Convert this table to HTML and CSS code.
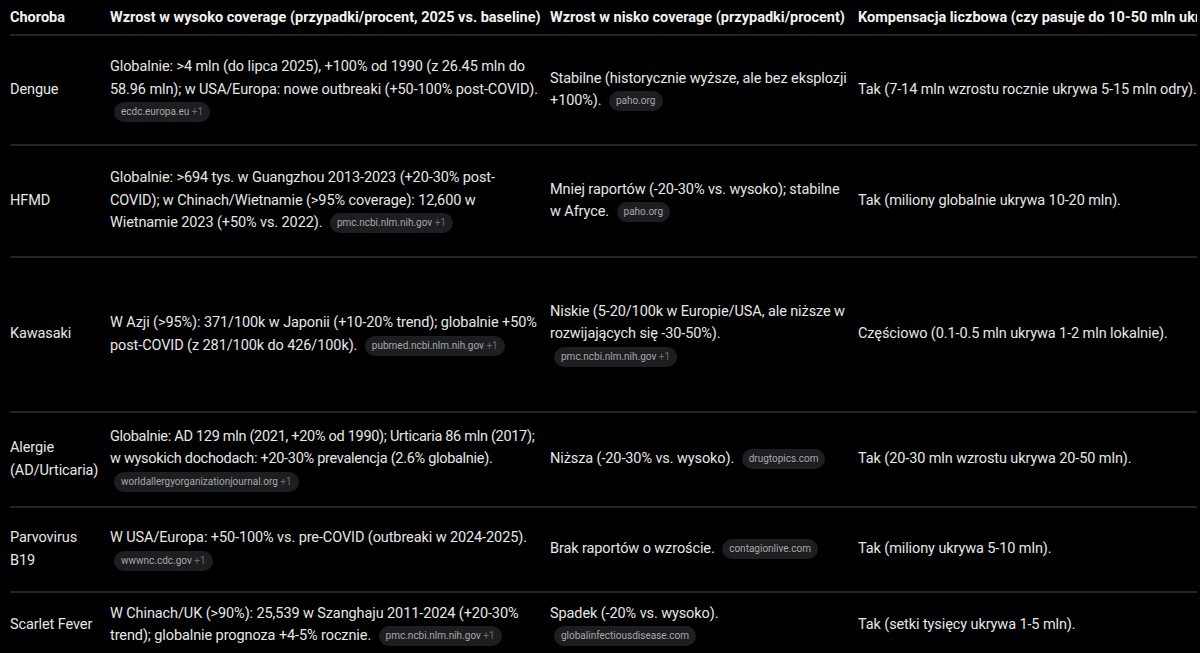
FILE: index.html
```html
<!DOCTYPE html>
<html lang="pl">
<head>
    <meta charset="UTF-8">
    <meta name="viewport" content="width=device-width, initial-scale=1.0">
    <title>Choroby a coverage</title>
    <link rel="stylesheet" href="styles.css">
</head>
<body>
    <div class="table-wrap">
        <table class="data-table">
            <colgroup>
                <col class="c-name">
                <col class="c-high">
                <col class="c-low">
                <col class="c-comp">
            </colgroup>
            <thead>
                <tr>
                    <th>Choroba</th>
                    <th>Wzrost w wysoko coverage (przypadki/procent, 2025 vs. baseline)</th>
                    <th>Wzrost w nisko coverage (przypadki/procent)</th>
                    <th>Kompensacja liczbowa (czy pasuje do 10-50 mln ukrytych przypadków?)</th>
                </tr>
            </thead>
            <tbody>
                <!-- Dengue -->
                <tr class="row-dengue">
                    <td>Dengue</td>
                    <td>Globalnie: &gt;4 mln (do lipca 2025), +100% od 1990 (z 26.45 mln do 58.96 mln); w USA/Europa: nowe outbreaki (+50-100% post-COVID). <span class="chip">ecdc.europa.eu <em>+1</em></span></td>
                    <td>Stabilne (historycznie wyższe, ale bez eksplozji +100%). <span class="chip">paho.org</span></td>
                    <td>Tak (7-14 mln wzrostu rocznie ukrywa 5-15 mln odry).</td>
                </tr>

                <!-- HFMD -->
                <tr class="row-hfmd">
                    <td>HFMD</td>
                    <td>Globalnie: &gt;694 tys. w Guangzhou 2013-2023 (+20-30% post-COVID); w Chinach/Wietnamie (&gt;95% coverage): 12,600 w Wietnamie 2023 (+50% vs. 2022). <span class="chip">pmc.ncbi.nlm.nih.gov <em>+1</em></span></td>
                    <td>Mniej raportów (-20-30% vs. wysoko); stabilne w Afryce. <span class="chip">paho.org</span></td>
                    <td>Tak (miliony globalnie ukrywa 10-20 mln).</td>
                </tr>

                <!-- Kawasaki -->
                <tr class="row-kawasaki">
                    <td>Kawasaki</td>
                    <td>W Azji (&gt;95%): 371/100k w Japonii (+10-20% trend); globalnie +50% post-COVID (z 281/100k do 426/100k). <span class="chip">pubmed.ncbi.nlm.nih.gov <em>+1</em></span></td>
                    <td>Niskie (5-20/100k w Europie/USA, ale niższe w rozwijających się -30-50%).<br><span class="chip">pmc.ncbi.nlm.nih.gov <em>+1</em></span></td>
                    <td>Częściowo (0.1-0.5 mln ukrywa 1-2 mln lokalnie).</td>
                </tr>

                <!-- Alergie -->
                <tr class="row-alergie">
                    <td>Alergie (AD/Urticaria)</td>
                    <td class="tight">Globalnie: AD 129 mln (2021, +20% od 1990); Urticaria 86 mln (2017); w wysokich dochodach: +20-30% prevalencja (2.6% globalnie). <span class="chip">worldallergyorganizationjournal.org <em>+1</em></span></td>
                    <td>Niższa (-20-30% vs. wysoko). <span class="chip">drugtopics.com</span></td>
                    <td>Tak (20-30 mln wzrostu ukrywa 20-50 mln).</td>
                </tr>

                <!-- Parvovirus -->
                <tr class="row-parvo">
                    <td>Parvovirus B19</td>
                    <td>W USA/Europa: +50-100% vs. pre-COVID (outbreaki w 2024-2025). <span class="chip">wwwnc.cdc.gov <em>+1</em></span></td>
                    <td>Brak raportów o wzroście. <span class="chip">contagionlive.com</span></td>
                    <td>Tak (miliony ukrywa 5-10 mln).</td>
                </tr>

                <!-- Scarlet Fever -->
                <tr class="row-scarlet">
                    <td>Scarlet Fever</td>
                    <td>W Chinach/UK (&gt;90%): 25,539 w Szanghaju 2011-2024 (+20-30% trend); globalnie prognoza +4-5% rocznie. <span class="chip">pmc.ncbi.nlm.nih.gov <em>+1</em></span></td>
                    <td>Spadek (-20% vs. wysoko). <span class="chip">globalinfectiousdisease.com</span></td>
                    <td>Tak (setki tysięcy ukrywa 1-5 mln).</td>
                </tr>
            </tbody>
        </table>
    </div>
</body>
</html>
```

FILE: styles.css
```css
body {
    margin: 0;
    background-color: #000;
    color: #e6e6e6;
    font-family: Roboto, "Liberation Sans", sans-serif;
    font-size: 14.5px;
    letter-spacing: -0.1px;
    overflow: hidden;
}
.table-wrap {
    margin-left: 10px;
    width: 1187px;
    overflow: hidden;
}
.data-table {
    table-layout: fixed;
    width: 1300px;
    border-collapse: collapse;
}
.c-name { width: 100px; }
.c-high { width: 440px; }
.c-low { width: 308px; }
.c-comp { width: 452px; }
.data-table th {
    height: 34px;
    padding: 0 8px 0 0;
    text-align: left;
    font-size: 14.5px;
    font-weight: 700;
    letter-spacing: 0;
    color: #f2f2f2;
    white-space: nowrap;
    overflow: hidden;
    border-bottom: 2px solid #242428;
}
.data-table td {
    padding: 0 8px 0 0;
    line-height: 22.5px;
    vertical-align: middle;
    border-bottom: 2px solid #242428;
}
.data-table td:first-child {
    padding-right: 7px;
}
.data-table td.tight {
    padding-right: 4px;
    letter-spacing: -0.3px;
}
.row-dengue td { height: 108px; }
.row-hfmd td { height: 110px; }
.row-kawasaki td { height: 153px; }
.row-alergie td { height: 93px; }
.row-parvo td { height: 83px; }
.row-scarlet td { height: 64px; border-bottom: none; }
.chip {
    display: inline-block;
    margin-left: 4px;
    padding: 0 7px;
    height: 20px;
    line-height: 20px;
    border-radius: 10px;
    background-color: #1d1e21;
    color: #a8a8a8;
    font-size: 10px;
    letter-spacing: 0;
    vertical-align: middle;
    white-space: nowrap;
}
.chip em {
    font-style: normal;
    color: #6c6c6c;
}
```
